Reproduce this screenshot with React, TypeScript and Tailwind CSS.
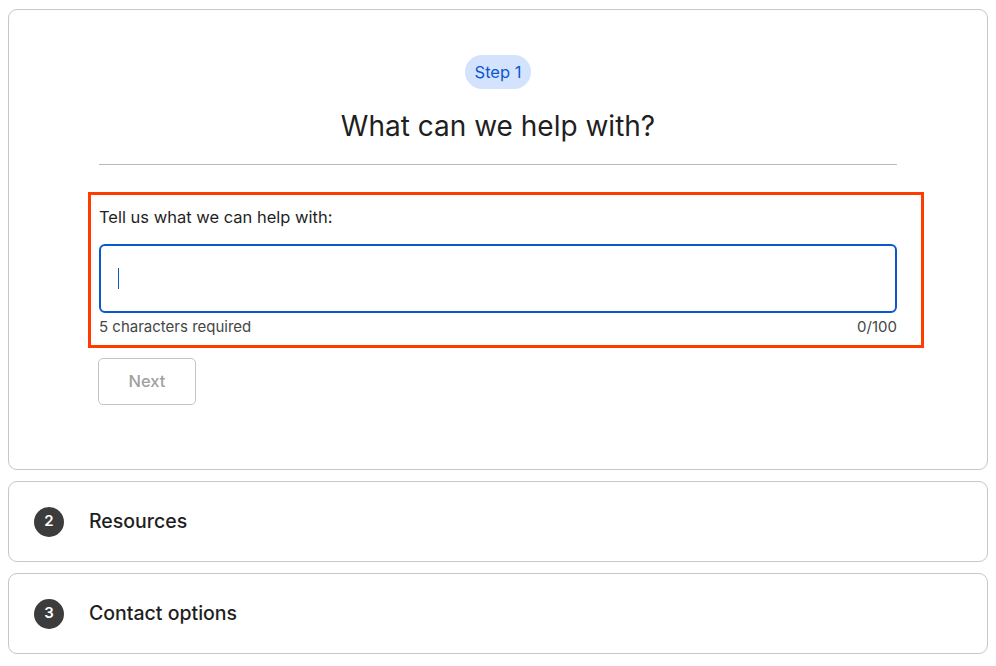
import React from "react";

export default function App() {
  const font = { fontFamily: 'Inter, "Open Sans", sans-serif' };
  return (
    <div className="w-[996px] h-[666px] bg-white flex flex-col gap-[11px] pl-[8px] pr-[8px] pt-[9px] text-[#1f1f1f]" style={font}>
      <div className="h-[461px] border border-[#c7c7c7] rounded-[9px] flex flex-col items-center">
        <div className="mt-[45px] h-[34px] px-[10px] rounded-full bg-[#d3e3fd] text-[#0b57d0] text-[16.5px] flex items-center">Step 1</div>
        <div className="mt-[19px] text-[28px] leading-[36px] text-[#1f1f1f]">What can we help with?</div>
        <div className="mt-[20px] w-[798px] h-px bg-[#b8b8b8]"></div>
        <div className="self-start ml-[79px] mt-[27px] w-[836px] border-[3px] border-[#ff3b00] pl-[8px] pr-[24px] pt-[10px] pb-[8px]">
          <div className="text-[16.5px] leading-[24px] text-[#1f1f1f]">Tell us what we can help with:</div>
          <div className="mt-[15px] h-[69px] border-2 border-[#0b57d0] rounded-[6px] flex items-center pl-[17px]">
            <div className="w-px h-[21px] bg-[#0b57d0]"></div>
          </div>
          <div className="mt-[4px] flex justify-between text-[15px] leading-[20px] text-[#444746]">
            <span>5 characters required</span>
            <span>0/100</span>
          </div>
        </div>
        <div className="self-start ml-[89px] mt-[10px] w-[98px] h-[47px] border border-[#c4c4c4] rounded-[5px] flex items-center justify-center text-[16.5px] font-medium text-[#a0a0a0]">Next</div>
      </div>
      {[
        { n: "2", t: "Resources" },
        { n: "3", t: "Contact options" },
      ].map((s) => (
        <div key={s.n} className="h-[81px] border border-[#c7c7c7] rounded-[9px] flex items-center pl-[25px]">
          <div className="w-[30px] h-[30px] rounded-full bg-[#3c3c3c] text-white text-[15px] font-semibold flex items-center justify-center">{s.n}</div>
          <div className="ml-[25px] text-[19.5px] font-medium text-[#1f1f1f]">{s.t}</div>
        </div>
      ))}
    </div>
  );
}
